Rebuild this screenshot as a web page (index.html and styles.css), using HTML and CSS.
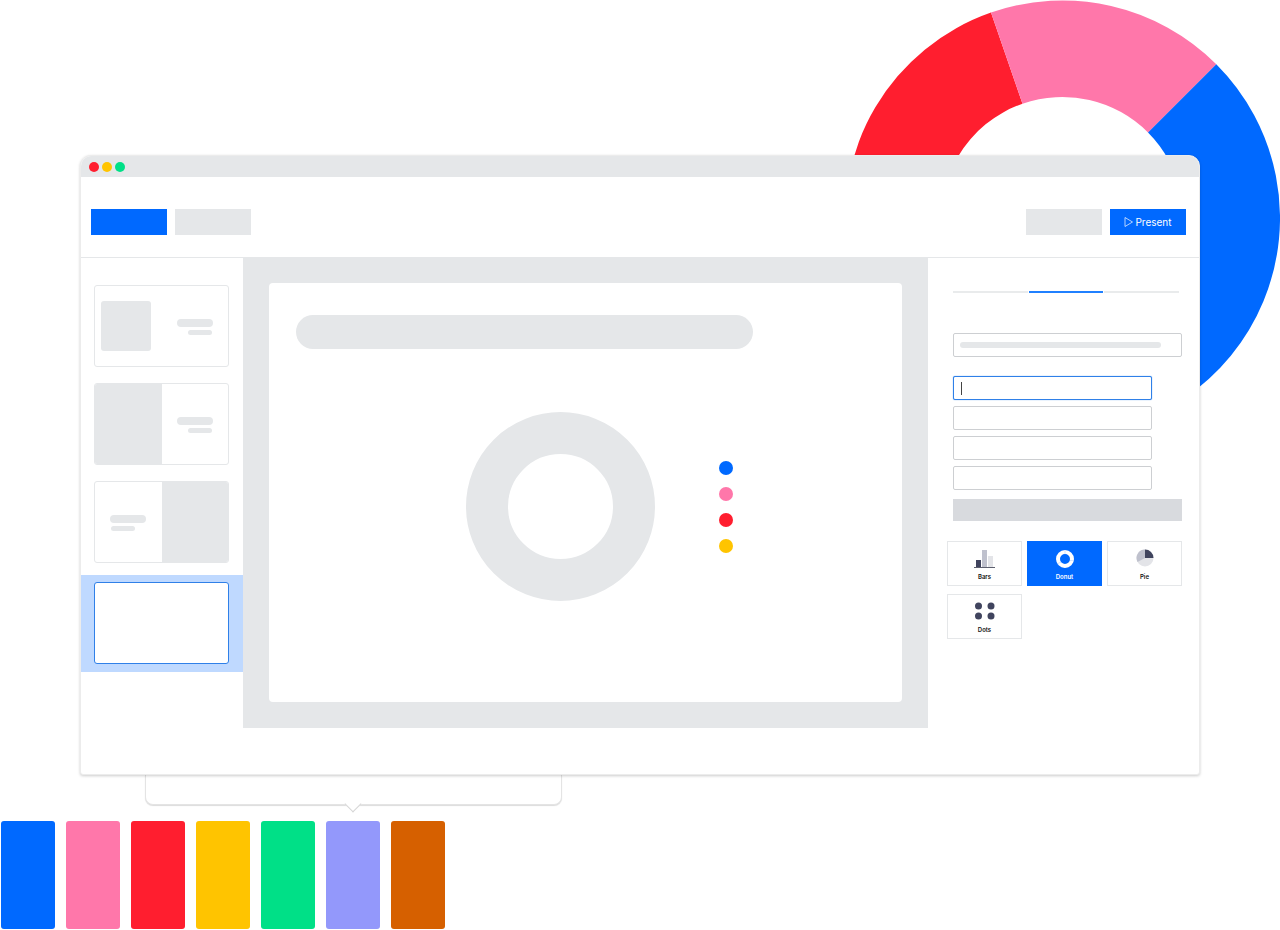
FILE: index.html
```
<!DOCTYPE html>
<html lang="en">

<head>
    <meta charset="UTF-8">
    <meta name="viewport" content="width=device-width, initial-scale=1.0">
    <title>Presentation editor</title>
    <link rel="stylesheet" href="styles.css">
</head>

<body>
    <div class="scene">
        <svg class="ring" viewBox="0 0 435 436" aria-hidden="true">
            <path fill="#ff1e2f" d="M217.5 435.5A217.5 217.5 0 0 1 146 12.6L177.5 103.7A121 121 0 0 0 217.5 339Z" />
            <path fill="#ff77aa" d="M146 12.6A217.5 217.5 0 0 1 371.3 64.2L303 132.5A121 121 0 0 0 177.5 103.7Z" />
            <path fill="#0069ff" d="M371.3 64.2A217.5 217.5 0 0 1 217.5 435.5V339A121 121 0 0 0 303 132.5Z" />
        </svg>

        <main class="window">
            <div class="titlebar">
                <span class="light red"></span>
                <span class="light yellow"></span>
                <span class="light green"></span>
            </div>

            <header class="toolbar">
                <button class="btn primary" aria-label="New slide"></button>
                <button class="btn" aria-label="Import"></button>
                <button class="btn push" aria-label="Share"></button>
                <button class="btn primary">
                    <svg class="play" viewBox="0 0 9 10" aria-hidden="true">
                        <path d="M1 0.500L8.500 5L1 9.500Z" fill="none" stroke="#fff" stroke-width="0.7" />
                    </svg>
                    Present
                </button>
            </header>

            <div class="workspace">
                <ul class="slides">
                    <li>
                        <button class="thumb" aria-label="Slide 1">
                            <span class="half"><span class="picture"></span></span>
                            <span class="half lines"><span class="line"></span><span class="line short"></span></span>
                        </button>
                    </li>
                    <li>
                        <button class="thumb" aria-label="Slide 2">
                            <span class="half filled"></span>
                            <span class="half lines"><span class="line"></span><span class="line short"></span></span>
                        </button>
                    </li>
                    <li>
                        <button class="thumb" aria-label="Slide 3">
                            <span class="half lines start"><span class="line"></span><span class="line short"></span></span>
                            <span class="half filled"></span>
                        </button>
                    </li>
                    <li class="active">
                        <button class="thumb" aria-label="Slide 4"></button>
                    </li>
                </ul>

                <section class="canvas">
                    <div class="slide">
                        <div class="slide-title"></div>
                        <div class="chart">
                            <div class="donut"></div>
                            <div class="legend">
                                <span class="dot blue"></span>
                                <span class="dot pink"></span>
                                <span class="dot red"></span>
                                <span class="dot yellow"></span>
                            </div>
                        </div>
                    </div>
                </section>

                <aside class="panel">
                    <div class="tabs">
                        <button class="tab" aria-label="Type"></button>
                        <button class="tab current" aria-label="Content"></button>
                        <button class="tab" aria-label="Design"></button>
                    </div>

                    <div class="field question">
                        <input type="text" aria-label="Question">
                    </div>

                    <div class="options">
                        <div class="field focused"><input type="text" aria-label="Option 1"></div>
                        <div class="field"><input type="text" aria-label="Option 2"></div>
                        <div class="field"><input type="text" aria-label="Option 3"></div>
                        <div class="field"><input type="text" aria-label="Option 4"></div>
                    </div>
                    <button class="add" aria-label="Add option"></button>

                    <div class="types">
                        <button class="type">
                            <svg viewBox="0 0 22 20" aria-hidden="true">
                                <path fill="#40445e" d="M2 12h5v7H2z" />
                                <path fill="#bfc1cd" d="M8 2h5v17H8z" />
                                <path fill="#e3e4e8" d="M14 8h5v11h-5z" />
                                <path fill="#5c5f6e" d="M0 19h21v1H0z" />
                            </svg>
                            Bars
                        </button>
                        <button class="type selected">
                            <svg viewBox="0 0 22 20" aria-hidden="true">
                                <circle cx="11" cy="11" r="7" fill="none" stroke="#fff" stroke-width="4" />
                                <path d="M11 2v4M16 12.500h4M7 14l-4 2" stroke="#b5d2ff" stroke-width="0.6" />
                            </svg>
                            Donut
                        </button>
                        <button class="type">
                            <svg viewBox="0 0 22 20" aria-hidden="true">
                                <circle cx="11" cy="10" r="8.500" fill="#e3e4e8" />
                                <path fill="#bfc1cd" d="M11 10V1.500A8.500 8.500 0 0 0 3.500 14Z" />
                                <path fill="#40445e" d="M11 10V1.500A8.500 8.500 0 0 1 19.500 10Z" />
                            </svg>
                            Pie
                        </button>
                        <button class="type">
                            <svg viewBox="0 0 22 20" aria-hidden="true" fill="#40445e">
                                <circle cx="4.500" cy="5" r="3.500" />
                                <circle cx="17" cy="5" r="3.500" />
                                <circle cx="4.500" cy="15" r="3.500" />
                                <circle cx="17" cy="15" r="3.500" />
                            </svg>
                            Dots
                        </button>
                    </div>
                </aside>
            </div>
        </main>

        <div class="popover"></div>

        <div class="swatches">
            <button class="swatch blue" aria-label="Blue"></button>
            <button class="swatch pink" aria-label="Pink"></button>
            <button class="swatch red" aria-label="Red"></button>
            <button class="swatch yellow" aria-label="Yellow"></button>
            <button class="swatch green" aria-label="Green"></button>
            <button class="swatch violet" aria-label="Violet"></button>
            <button class="swatch orange" aria-label="Orange"></button>
        </div>
    </div>
</body>

</html>
```
FILE: styles.css
```
* {
    margin: 0;
    padding: 0;
    box-sizing: border-box;
    font-family: Inter, "Liberation Sans", sans-serif;
}

body {
    background-color: #fff;
}

button {
    border: 0;
    cursor: pointer;
}

.scene {
    position: relative;
    padding-top: 155px;
}

/* big ring behind the window */
.ring {
    position: absolute;
    top: 0;
    right: 0;
    width: 435px;
}

.blue { background-color: #0069ff; }
.pink { background-color: #ff77aa; }
.red { background-color: #ff1e2f; }
.yellow { background-color: #ffc400; }
.green { background-color: #00e087; }
.violet { background-color: #9398fb; }
.orange { background-color: #d66000; }

.window {
    position: relative;
    z-index: 1;
    margin: 0 80px;
    padding-bottom: 46px;
    background-color: #fff;
    border: 1px solid #ececec;
    border-radius: 11px 11px 3px 3px;
    box-shadow: 0 1px 3px rgba(0, 0, 0, 0.2);
}

.titlebar {
    display: flex;
    align-items: center;
    gap: 3px;
    height: 21px;
    padding-left: 8px;
    background-color: #e5e7e9;
    border-radius: 10px 10px 0 0;
}

.light {
    width: 10px;
    height: 10px;
    border-radius: 50%;
}

.toolbar {
    display: flex;
    align-items: center;
    gap: 8px;
    height: 81px;
    padding: 9px 13px 0 10px;
    border-bottom: 1px solid #e5e7e9;
}

.btn {
    display: flex;
    align-items: center;
    justify-content: center;
    gap: 2px;
    width: 76px;
    height: 26px;
    background-color: #e5e7e9;
    color: #fff;
    font-size: 10px;
}

.btn.primary {
    background-color: #0069ff;
}

.push {
    margin-left: auto;
}

.play {
    width: 9px;
    height: 10px;
}

.workspace {
    display: flex;
    min-height: 470px;
}

/* slide list */
.slides {
    width: 162px;
    padding-top: 19px;
    list-style: none;
}

.slides li {
    padding: 8px 14px 8px 13px;
}

.slides .active {
    margin-top: 4px;
    padding-top: 7px;
    background-color: #bfd9ff;
}

.thumb {
    display: flex;
    width: 100%;
    height: 82px;
    background-color: #fff;
    border: 1px solid #e5e7e9;
    border-radius: 3px;
    overflow: hidden;
}

.active .thumb {
    border-color: #2f80e8;
}

.half {
    display: flex;
    align-items: center;
    width: 50%;
    height: 100%;
}

.filled {
    background-color: #e5e7e9;
}

.picture {
    width: 50px;
    height: 50px;
    margin-left: 6px;
    background-color: #e5e7e9;
    border-radius: 3px;
}

.lines {
    flex-direction: column;
    align-items: flex-end;
    justify-content: center;
    gap: 3px;
    padding: 2px 15px 0;
}

.lines.start {
    align-items: flex-start;
}

.line {
    width: 36px;
    height: 8px;
    background-color: #e5e7e9;
    border-radius: 4px;
}

.line.short {
    width: 24px;
    height: 5px;
    margin: 0 1px;
}

/* slide being edited */
.canvas {
    flex: 1;
    display: flex;
    padding: 25px 26px 26px;
    background-color: #e5e7e9;
}

.slide {
    flex: 1;
    padding: 32px 27px;
    background-color: #fff;
    border-radius: 4px;
}

.slide-title {
    width: 79%;
    height: 34px;
    background-color: #e5e7e9;
    border-radius: 17px;
}

.chart {
    display: flex;
    align-items: center;
    justify-content: center;
    gap: 64px;
    margin-top: 63px;
    padding-left: 28px;
}

.donut {
    width: 189px;
    height: 189px;
    border: 42px solid #e5e7e9;
    border-radius: 50%;
}

.legend {
    display: flex;
    flex-direction: column;
    gap: 12px;
}

.dot {
    width: 14px;
    height: 14px;
    border-radius: 50%;
}

/* settings */
.panel {
    width: 271px;
    padding: 33px 17px 0 25px;
}

.tabs {
    display: flex;
    gap: 1px;
    margin-right: 3px;
}

.tab {
    flex: 1;
    height: 2px;
    background-color: #e9ebec;
}

.tab.current {
    background-color: #2080ff;
}

.field {
    position: relative;
}

.field input {
    display: block;
    width: 100%;
    height: 24px;
    padding: 0 8px;
    background-color: #fff;
    border: 1px solid #cdcfd2;
    border-radius: 2px;
    outline: 0;
    font-size: 10px;
}

.question {
    margin-top: 40px;
}

.question::after {
    content: "";
    position: absolute;
    top: 9px;
    left: 7px;
    right: 21px;
    height: 6px;
    background-color: #e5e7e9;
    border-radius: 3px;
}

.options {
    display: flex;
    flex-direction: column;
    gap: 6px;
    margin-top: 19px;
    margin-right: 30px;
}

.focused input {
    border-color: #2f80e8;
    box-shadow: 0 0 1px #2f80e8;
}

/* text cursor */
.focused::after {
    content: "";
    position: absolute;
    top: 6px;
    left: 8px;
    width: 1px;
    height: 13px;
    background-color: #444;
}

.add {
    display: block;
    width: 100%;
    height: 22px;
    margin-top: 9px;
    background-color: #d8dade;
}

.types {
    display: grid;
    grid-template-columns: repeat(3, 1fr);
    gap: 8px 5px;
    margin-top: 20px;
    margin-left: -6px;
}

.type {
    display: flex;
    flex-direction: column;
    align-items: center;
    justify-content: center;
    gap: 5px;
    height: 45px;
    padding-top: 2px;
    background-color: #fff;
    border: 1px solid #e5e7e9;
    color: #111;
    font-size: 6px;
    font-weight: 600;
    line-height: 8px;
}

.type svg {
    width: 22px;
    height: 20px;
}

.type.selected {
    background-color: #0069ff;
    border-color: #0069ff;
    color: #fff;
}

/* colour picker */
.popover {
    position: relative;
    width: 417px;
    height: 30px;
    margin-left: 145px;
    background-color: #fff;
    border: 1px solid #e4e4e4;
    border-top: 0;
    border-radius: 0 0 8px 8px;
    box-shadow: 0 1px 1px rgba(0, 0, 0, 0.14);
}

.popover::after {
    content: "";
    position: absolute;
    bottom: -6px;
    left: 201px;
    width: 11px;
    height: 11px;
    background-color: #fff;
    border: solid #d6d6d6;
    border-width: 0 1px 1px 0;
    transform: rotate(45deg);
}

.swatches {
    display: flex;
    gap: 11px;
    padding: 16px 1px 1px;
}

.swatch {
    width: 54px;
    height: 108px;
    border-radius: 3px;
}
```
